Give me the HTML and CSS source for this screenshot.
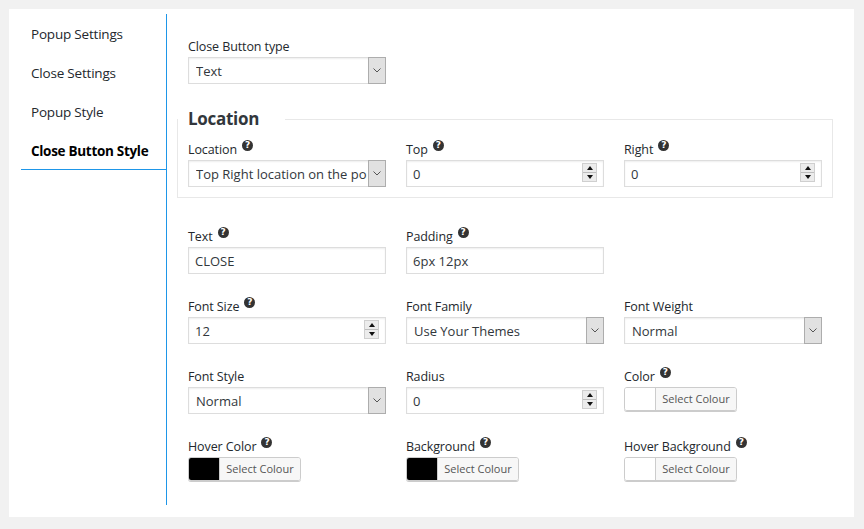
FILE: index.html
```html
<!DOCTYPE html>
<html>
<head>
<meta charset="utf-8">
<link rel="stylesheet" href="styles.css">
</head>
<body>
<div class="panel">
  <nav class="tabs">
    <a class="tab">Popup Settings</a>
    <a class="tab">Close Settings</a>
    <a class="tab">Popup Style</a>
    <a class="tab active">Close Button Style</a>
  </nav>
  <div class="content">
    <div class="grid row">
      <div class="field">
        <label class="lbl">Close Button type</label>
        <div class="select"><select><option>Text</option></select><span class="select-btn"><svg width="8" height="5" viewBox="0 0 8 5"><path d="M0.5 0.5 L4 4 L7.5 0.5" fill="none" stroke="#555" stroke-width="1"/></svg></span></div>
      </div>
    </div>

    <fieldset class="group">
      <legend>Location</legend>
      <div class="grid group-body">
        <div class="field">
          <label class="lbl">Location<span class="help">?</span></label>
          <div class="select"><select><option>Top Right location on the popup</option></select><span class="select-btn"><svg width="8" height="5" viewBox="0 0 8 5"><path d="M0.5 0.5 L4 4 L7.5 0.5" fill="none" stroke="#555" stroke-width="1"/></svg></span></div>
        </div>
        <div class="field">
          <label class="lbl">Top<span class="help">?</span></label>
          <div class="num"><input class="input" type="text" value="0"><span class="spin"><span class="up"></span><span class="down"></span></span></div>
        </div>
        <div class="field">
          <label class="lbl">Right<span class="help">?</span></label>
          <div class="num"><input class="input" type="text" value="0"><span class="spin"><span class="up"></span><span class="down"></span></span></div>
        </div>
      </div>
    </fieldset>

    <div class="grid row row-first">
      <div class="field">
        <label class="lbl">Text<span class="help">?</span></label>
        <input class="input" type="text" value="CLOSE">
      </div>
      <div class="field">
        <label class="lbl">Padding<span class="help">?</span></label>
        <input class="input" type="text" value="6px 12px">
      </div>
    </div>

    <div class="grid row">
      <div class="field">
        <label class="lbl">Font Size<span class="help">?</span></label>
        <div class="num"><input class="input" type="text" value="12"><span class="spin"><span class="up"></span><span class="down"></span></span></div>
      </div>
      <div class="field">
        <label class="lbl">Font Family</label>
        <div class="select"><select><option>Use Your Themes</option></select><span class="select-btn"><svg width="8" height="5" viewBox="0 0 8 5"><path d="M0.5 0.5 L4 4 L7.5 0.5" fill="none" stroke="#555" stroke-width="1"/></svg></span></div>
      </div>
      <div class="field">
        <label class="lbl">Font Weight</label>
        <div class="select"><select><option>Normal</option></select><span class="select-btn"><svg width="8" height="5" viewBox="0 0 8 5"><path d="M0.5 0.5 L4 4 L7.5 0.5" fill="none" stroke="#555" stroke-width="1"/></svg></span></div>
      </div>
    </div>

    <div class="grid row">
      <div class="field">
        <label class="lbl">Font Style</label>
        <div class="select"><select><option>Normal</option></select><span class="select-btn"><svg width="8" height="5" viewBox="0 0 8 5"><path d="M0.5 0.5 L4 4 L7.5 0.5" fill="none" stroke="#555" stroke-width="1"/></svg></span></div>
      </div>
      <div class="field">
        <label class="lbl">Radius</label>
        <div class="num"><input class="input" type="text" value="0"><span class="spin"><span class="up"></span><span class="down"></span></span></div>
      </div>
      <div class="field field-color">
        <label class="lbl">Color<span class="help">?</span></label>
        <div class="picker"><span class="swatch"></span><span class="pick-btn">Select Colour</span></div>
      </div>
    </div>

    <div class="grid row">
      <div class="field field-color">
        <label class="lbl">Hover Color<span class="help">?</span></label>
        <div class="picker"><span class="swatch swatch-black"></span><span class="pick-btn">Select Colour</span></div>
      </div>
      <div class="field field-color">
        <label class="lbl">Background<span class="help">?</span></label>
        <div class="picker"><span class="swatch swatch-black"></span><span class="pick-btn">Select Colour</span></div>
      </div>
      <div class="field field-color">
        <label class="lbl">Hover Background<span class="help">?</span></label>
        <div class="picker"><span class="swatch"></span><span class="pick-btn">Select Colour</span></div>
      </div>
    </div>
  </div>
</div>
</body>
</html>
```
FILE: styles.css
```css
* { box-sizing: border-box; }
html, body { margin: 0; padding: 0; }
body {
  background: #f1f1f1;
  font-family: "Open Sans", "Noto Sans", sans-serif;
  color: #23282d;
  width: 864px;
  height: 529px;
  overflow: hidden;
}
.panel {
  margin: 9px 10px 0 9px;
  width: 845px;
  height: 508px;
  background: #fff;
  display: flex;
  padding: 5px 0 12px 12px;
}
.tabs {
  width: 146px;
  border-right: 1px solid #1e96e8;
  display: flex;
  flex-direction: column;
}
.tab {
  display: block;
  height: 39px;
  line-height: 40px;
  padding-left: 10px;
  font-size: 13.5px;
  color: #23282d;
  letter-spacing: -0.2px;
}
.tab.active {
  font-weight: 700;
  color: #000;
  line-height: 40px;
  border-bottom: 1px solid #1e96e8;
  letter-spacing: -0.3px;
}
.content {
  flex: 1;
  padding: 23px 0 0 10px;
}
.grid {
  display: grid;
  grid-template-columns: 198px 198px 198px;
  column-gap: 20px;
}
.row { padding-left: 11px; margin-bottom: 23px; }
.row-first { margin-top: 29px; }
.lbl {
  display: block;
  font-size: 12.5px;
  line-height: 19px;
  height: 18px;
  margin-bottom: 2px;
  color: #23282d;
  white-space: nowrap;
  letter-spacing: -0.1px;
}
.help {
  display: inline-block;
  width: 11px;
  height: 11px;
  border-radius: 50%;
  background: #333;
  color: #fff;
  font-size: 9px;
  font-weight: 700;
  line-height: 11px;
  text-align: center;
  margin-left: 5px;
  vertical-align: 6px;
  font-family: "DejaVu Sans", sans-serif;
}
.input {
  display: block;
  width: 198px;
  height: 27px;
  border: 1px solid #ddd;
  box-shadow: inset 0 1px 2px rgba(0,0,0,0.07);
  background: #fff;
  font-family: "Open Sans", "Noto Sans", sans-serif;
  font-size: 13px;
  color: #32373c;
  padding: 0 6px;
  margin: 0;
  outline: none;
}
.select {
  position: relative;
  width: 198px;
  height: 27px;
}
.select select {
  -webkit-appearance: none;
  appearance: none;
  display: block;
  width: 100%;
  height: 27px;
  border: 1px solid #ddd;
  border-radius: 0;
  background: #fff;
  box-shadow: inset 0 1px 2px rgba(0,0,0,0.07);
  font-family: "Open Sans", "Noto Sans", sans-serif;
  font-size: 13px;
  color: #32373c;
  padding: 0 18px 0 7px;
  margin: 0;
  outline: none;
}
.select-btn {
  position: absolute;
  top: 0;
  right: 0;
  width: 18px;
  height: 27px;
  background: #e1e1e1;
  border: 1px solid #adadad;
  display: flex;
  align-items: center;
  justify-content: center;
}
.num { position: relative; width: 198px; }
.spin {
  position: absolute;
  right: 7px;
  top: 3px;
  width: 15px;
  height: 19px;
  border: 1px solid #cfcfcf;
  background: #ececec;
  display: flex;
  flex-direction: column;
}
.spin .up, .spin .down {
  flex: 1;
  display: flex;
  align-items: center;
  justify-content: center;
}
.spin .up { border-bottom: 1px solid #bdbdbd; }
.spin .up::before {
  content: "";
  border-left: 3px solid transparent;
  border-right: 3px solid transparent;
  border-bottom: 4px solid #111;
}
.spin .down::before {
  content: "";
  border-left: 3px solid transparent;
  border-right: 3px solid transparent;
  border-top: 4px solid #111;
}
.picker {
  display: flex;
  width: 113px;
  height: 24px;
  border: 1px solid #ccc;
  border-radius: 3px;
  box-shadow: 0 1px 0 #ccc;
  overflow: hidden;
}
.swatch {
  width: 30px;
  height: 100%;
  background: #fff;
}
.swatch-black { background: #000; }
.pick-btn {
  flex: 1;
  border-left: 1px solid #ccc;
  background: #f7f7f7;
  font-size: 11px;
  line-height: 22px;
  color: #555;
  text-align: center;
  white-space: nowrap;
}
.group {
  margin: 23px 0 0 0;
  padding: 0;
  width: 656px;
  min-width: 0;
  border: 1px solid #e8e8e8;
}
.group legend {
  padding: 0 26px 0 10px;
  margin: 0;
  font-size: 17px;
  font-weight: 700;
  line-height: 24px;
  color: #32373c;
  letter-spacing: -0.3px;
}
.group-body {
  padding: 9px 9px 10px 10px;
}
```
